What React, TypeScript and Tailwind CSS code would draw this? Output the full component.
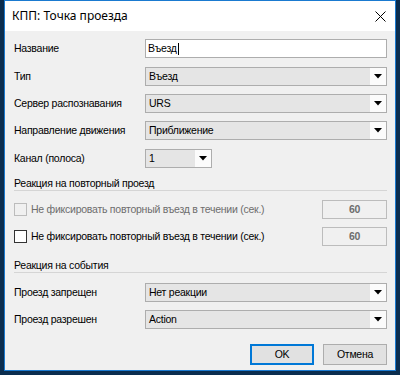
import React from "react";

const F = { fontFamily: '"Liberation Sans", Arial, sans-serif' };

function Arrow() {
  return (
    <svg width="8" height="5" viewBox="0 0 8 5" className="block">
      <path d="M0 0 H8 L4 4.5 Z" fill="#000" />
    </svg>
  );
}

function Select({ value, width }: { value: string; width?: string }) {
  return (
    <div className={`flex h-[19px] border border-[#adadad] bg-[#e5e5e5] ${width ?? "flex-1"}`}>
      <div className="flex flex-1 items-center pl-[3px] text-black">{value}</div>
      <div className="flex w-[16px] items-center justify-center bg-[#fbfbfb]">
        <Arrow />
      </div>
    </div>
  );
}

function Row({ label, children, mt }: { label: string; children: React.ReactNode; mt: string }) {
  return (
    <div className={`flex h-[19px] items-center ${mt}`}>
      <div className="w-[131px] shrink-0 text-black">{label}</div>
      {children}
    </div>
  );
}

function Header({ text, mt }: { text: string; mt: string }) {
  return (
    <div className={mt}>
      <div className="h-[13px] leading-[13px] text-black">{text}</div>
      <div className="h-px bg-[#d5d5d5]" />
    </div>
  );
}

function CheckRow({ disabled, mt }: { disabled?: boolean; mt: string }) {
  return (
    <div className={`flex h-[19px] items-center ${mt}`}>
      <div
        className={`h-[13px] w-[13px] shrink-0 border ${
          disabled ? "border-[#bcbcbc] bg-[#f0f0f0]" : "border-[#333333] bg-white"
        }`}
      />
      <div className={`ml-[4px] flex-1 ${disabled ? "text-[#6d6d6d]" : "text-black"}`}>
        Не фиксировать повторный въезд в течении (сек.)
      </div>
      <div className="flex h-[19px] w-[65px] items-center justify-center border border-[#bcbcbc] bg-[#f0f0f0] font-bold text-[#6d6d6d]">
        60
      </div>
    </div>
  );
}

export default function App() {
  return (
    <div
      className="h-[375px] w-[400px] overflow-hidden bg-[#0b2d4e] pl-[4px] text-[10.5px] tracking-[-0.25px]"
      style={F}
    >
      <div className="flex h-[371px] w-[392px] flex-col border border-[#1a7ad0] bg-[#f0f0f0]">
        <div className="flex h-[30px] shrink-0 items-center justify-between bg-white pl-[7px] pr-[8px]">
          <span
            className="text-[12px] tracking-normal text-black"
            style={{ fontFamily: '"Noto Sans", "Liberation Sans", sans-serif' }}
          >
            КПП: Точка проезда
          </span>
          <svg width="11" height="11" viewBox="0 0 11 11" className="mr-[1px]">
            <path d="M0.5 0.5 L10.5 10.5 M10.5 0.5 L0.5 10.5" stroke="#000" strokeWidth="1" />
          </svg>
        </div>
        <div className="flex flex-1 flex-col pl-[9px] pr-[8px] pt-[8px]">
          <Row label="Название" mt="">
            <div className="flex h-[19px] flex-1 items-center border border-[#adadad] bg-white pl-[2px] text-black">
              Въезд<span className="ml-px inline-block h-[12px] w-px bg-black" />
            </div>
          </Row>
          <Row label="Тип" mt="mt-[9px]">
            <Select value="Въезд" />
          </Row>
          <Row label="Сервер распознавания" mt="mt-[8px]">
            <Select value="URS" />
          </Row>
          <Row label="Направление движения" mt="mt-[8px]">
            <Select value="Приближение" />
          </Row>
          <Row label="Канал (полоса)" mt="mt-[9px]">
            <Select value="1" width="w-[67px]" />
          </Row>
          <Header text="Реакция на повторный проезд" mt="mt-[9px]" />
          <CheckRow disabled mt="mt-[9px]" />
          <CheckRow mt="mt-[8px]" />
          <Header text="Реакция на события" mt="mt-[13px]" />
          <Row label="Проезд запрещен" mt="mt-[10px]">
            <Select value="Нет реакции" />
          </Row>
          <Row label="Проезд разрешен" mt="mt-[8px]">
            <Select value="Action" />
          </Row>
          <div className="mt-[15px] flex justify-end gap-[9px]">
            <button className="flex h-[21px] w-[64px] items-center justify-center border border-[#0078d7] bg-[#e1e1e1] text-black shadow-[inset_0_0_0_1px_#0078d7]">
              OK
            </button>
            <button className="flex h-[21px] w-[64px] items-center justify-center border border-[#adadad] bg-[#e1e1e1] text-black">
              Отмена
            </button>
          </div>
        </div>
      </div>
    </div>
  );
}
